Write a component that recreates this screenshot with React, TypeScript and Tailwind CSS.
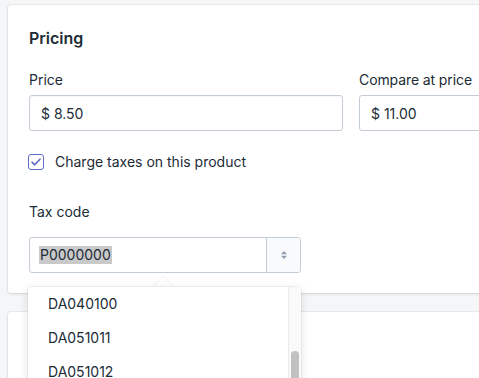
import React from "react";

export default function App() {
  const font = { fontFamily: "Inter, 'Noto Sans', sans-serif" };
  return (
    <div
      className="relative w-[479px] h-[378px] overflow-hidden bg-[#f4f6f8] text-[#212b36]"
      style={font}
    >
      <div className="pl-[8px] pt-[5px]">
        <div className="w-[686px] rounded-[3px] bg-white shadow-[0_0_0_1px_rgba(63,63,68,0.05),0_1px_3px_0_rgba(63,63,68,0.15)] px-[21px] pt-[21px] pb-[20px]">
          <h2 className="text-[16px] leading-[24px] font-semibold">Pricing</h2>
          <div className="mt-[20px] flex gap-[16px]">
            <div className="w-[314px]">
              <div className="text-[14px] leading-[20px]">Price</div>
              <div className="mt-[5px] h-[36px] rounded-[3px] border border-[#c4cdd5] shadow-[inset_0_1px_0_0_rgba(99,115,129,0.05)] flex items-center px-[11px] text-[14px]">
                $ 8.50
              </div>
            </div>
            <div className="w-[314px]">
              <div className="text-[14px] leading-[20px] tracking-[-0.1px]">Compare at price</div>
              <div className="mt-[5px] h-[36px] rounded-[3px] border border-[#c4cdd5] flex items-center px-[11px] text-[14px]">
                $ 11.00
              </div>
            </div>
          </div>
          <div className="mt-[21px] flex items-center gap-[11px] h-[20px]">
            <div className="w-[16px] h-[16px] rounded-[3px] border border-[#5c6ac4] flex items-center justify-center -ml-[1px]">
              <svg width="10" height="8" viewBox="0 0 10 8" fill="none">
                <path d="M1 4.2 L3.7 6.8 L9 1.2" stroke="#5c6ac4" strokeWidth="1.6" strokeLinecap="round" strokeLinejoin="round" />
              </svg>
            </div>
            <span className="text-[14px] leading-[20px]">Charge taxes on this product</span>
          </div>
          <div className="mt-[30px] text-[14px] leading-[20px]">Tax code</div>
          <div className="mt-[15px] w-[272px] h-[36px] rounded-[3px] border border-[#c4cdd5] flex overflow-hidden">
            <div className="flex-1 flex items-center pl-[9px]">
              <span className="bg-[#c9c9c9] px-[1px] text-[14px] leading-[18px]">P0000000</span>
            </div>
            <div className="w-[34px] border-l border-[#c4cdd5] bg-[#f9fafb] flex items-center justify-center">
              <svg width="10" height="14" viewBox="0 0 10 14">
                <path d="M5 3 L8 6.2 L2 6.2 Z" fill="#919eab" />
                <path d="M5 11 L8 7.8 L2 7.8 Z" fill="#919eab" />
              </svg>
            </div>
          </div>
        </div>
        <div className="mt-[19px] w-[686px] h-[100px] rounded-[3px] bg-white shadow-[0_0_0_1px_rgba(63,63,68,0.05),0_1px_3px_0_rgba(63,63,68,0.15)]" />
      </div>

      {/* dropdown popover */}
      <div className="absolute left-[28px] top-[287px] w-[273px] h-[120px]">
        <div className="absolute left-[128px] -top-[7px] w-[14px] h-[14px] rotate-45 bg-white shadow-[-1px_-1px_2px_rgba(0,0,0,0.06)]" />
        <div className="relative h-full bg-white rounded-t-[3px] shadow-[0_0_0_1px_rgba(0,0,0,0.04),0_2px_10px_rgba(0,0,0,0.12)] flex">
          <div className="flex-1 text-[14px] -mt-[1px]">
            <div className="h-[34px] flex items-center pl-[20px]">DA040100</div>
            <div className="h-[34px] flex items-center pl-[20px]">DA051011</div>
            <div className="h-[34px] flex items-center pl-[20px]">DA051012</div>
          </div>
          <div className="w-[13px] bg-[#fafafa] border-l border-[#ebebeb] relative">
            <div className="absolute left-[2px] top-[64px] w-[8px] h-[60px] rounded-full bg-[#c1c1c1]" />
          </div>
        </div>
      </div>
    </div>
  );
}
